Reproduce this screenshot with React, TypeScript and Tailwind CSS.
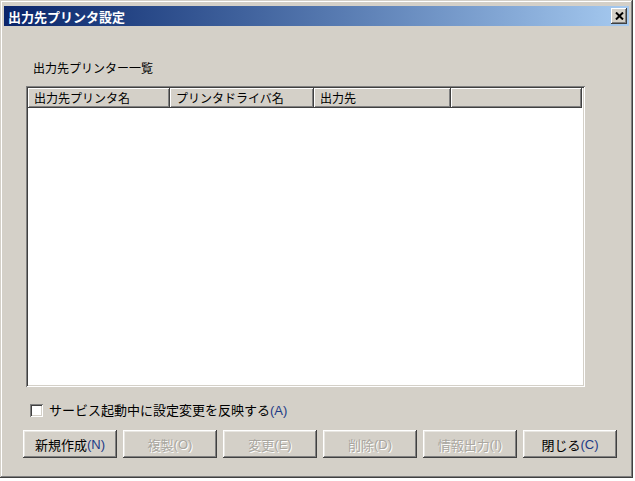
const jp = { fontFamily: '"Noto Sans CJK JP", "Liberation Sans", sans-serif' };

function Mn({ k, disabled }: { k: string; disabled?: boolean }) {
  return (
    <span className={disabled ? "" : "text-[#1c3a86]"} style={{ fontFamily: '"Liberation Sans", sans-serif' }}>
      ({k})
    </span>
  );
}

function Btn({ label, k, disabled }: { label: string; k: string; disabled?: boolean }) {
  return (
    <div
      className={`w-[94px] h-[28px] flex items-center justify-center text-[13px] leading-none bg-[#d4d0c8] shadow-[inset_-1px_-1px_#404040,inset_1px_1px_#ffffff,inset_-2px_-2px_#808080,inset_2px_2px_#e8e6e1] ${
        disabled ? "text-[#aaa7a0] [text-shadow:1px_1px_0_#ffffff]" : "text-black"
      }`}
    >
      <span>{label}</span>
      <Mn k={k} disabled={disabled} />
    </div>
  );
}

function HeaderCell({ w, children }: { w: string; children?: React.ReactNode }) {
  return (
    <div
      className={`${w} h-[20px] flex items-center pl-[6px] text-[12px] bg-[#d4d0c8] shadow-[inset_-1px_-1px_#404040,inset_1px_1px_#ffffff,inset_-2px_-2px_#808080]`}
    >
      {children}
    </div>
  );
}

export default function App() {
  return (
    <div className="w-[635px] h-[481px] bg-white" style={jp}>
      <div className="w-[633px] h-[478px] bg-[#d4d0c8] flex flex-col p-[4px] shadow-[inset_-1px_-1px_#404040,inset_1px_1px_#d4d0c8,inset_-2px_-2px_#808080,inset_2px_2px_#ffffff]">
        {/* title bar */}
        <div className="h-[20px] mt-[2px] flex items-center justify-between pl-[4px] pr-[2px] bg-gradient-to-r from-[#0a246a] to-[#a6caf0]">
          <span className="text-white font-bold text-[13px] leading-none">出力先プリンタ設定</span>
          <div className="w-[16px] h-[16px] flex items-center justify-center bg-[#d4d0c8] shadow-[inset_-1px_-1px_#404040,inset_1px_1px_#ffffff,inset_-2px_-2px_#808080]">
            <svg width="9" height="8" viewBox="0 0 9 8">
              <path d="M1 0.5 L8 7.5 M8 0.5 L1 7.5" stroke="#000" strokeWidth="2" />
            </svg>
          </div>
        </div>

        {/* body */}
        <div className="flex flex-col pl-[22px] pr-[44px]">
          <div className="mt-[35px] ml-[7px] text-[12px] leading-[14px] text-black">出力先プリンター一覧</div>

          {/* list view */}
          <div className="mt-[11px] h-[301px] bg-white flex flex-col p-[2px] shadow-[inset_1px_1px_#808080,inset_-1px_-1px_#ffffff,inset_2px_2px_#404040,inset_-2px_-2px_#d4d0c8]">
            <div className="flex">
              <HeaderCell w="w-[142px]">出力先プリンタ名</HeaderCell>
              <HeaderCell w="w-[144px]">プリンタドライバ名</HeaderCell>
              <HeaderCell w="w-[137px]">出力先</HeaderCell>
              <HeaderCell w="w-[131px]" />
            </div>
          </div>

          {/* checkbox */}
          <div className="mt-[15px] ml-[4px] flex items-center gap-[6px] text-[13px] leading-[16px]">
            <div className="w-[13px] h-[13px] bg-white shadow-[inset_1px_1px_#808080,inset_-1px_-1px_#ffffff,inset_2px_2px_#404040,inset_-2px_-2px_#d4d0c8]" />
            <span>
              サービス起動中に設定変更を反映する
              <Mn k="A" />
            </span>
          </div>
        </div>

        {/* buttons */}
        <div className="mt-[11px] ml-[19px] flex gap-[6px]">
          <Btn label="新規作成" k="N" />
          <Btn label="複製" k="O" disabled />
          <Btn label="変更" k="E" disabled />
          <Btn label="削除" k="D" disabled />
          <Btn label="情報出力" k="I" disabled />
          <Btn label="閉じる" k="C" />
        </div>
      </div>
    </div>
  );
}
